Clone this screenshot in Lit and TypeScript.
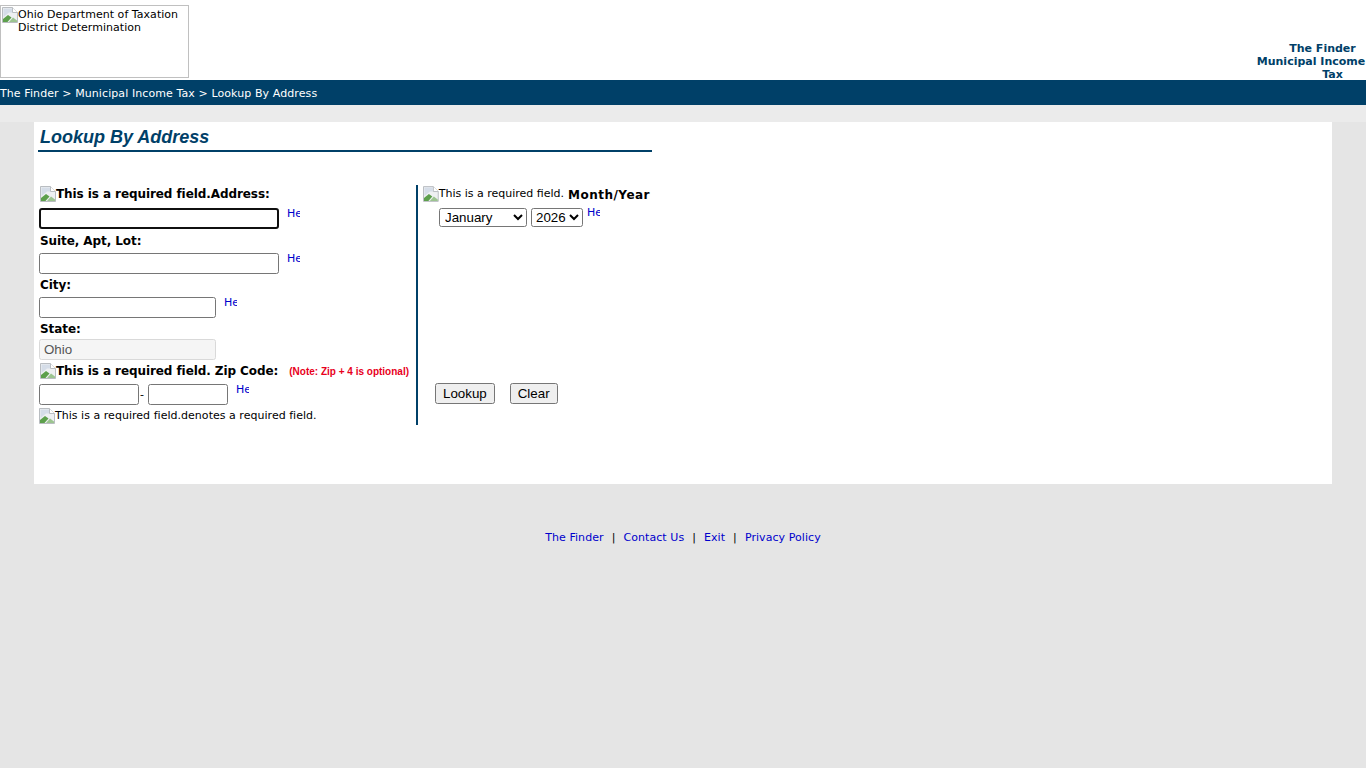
import { LitElement, html, css } from "lit";
import { customElement } from "lit/decorators.js";

const broken = html`<svg class="broken" width="16" height="16" viewBox="0 0 16 16">
  <path d="M0.5 0.5H10.5L15.5 5.5V15.5H0.5Z" fill="#eef0f2" stroke="#b9bdc1"/>
  <path d="M10.5 0.5V5.5H15.5" fill="#fff" stroke="#b9bdc1"/>
  <path d="M1.5 1.5H10V5.5H7L1.5 10Z" fill="#d5dde8"/>
  <path d="M1 15V12L6 8L9.5 10.5L5.5 15Z" fill="#5da04c"/>
  <path d="M7 15L11 10.5L15 13.5V15Z" fill="#9cc490"/>
</svg>`;

@customElement("app-root")
export class AppRoot extends LitElement {
  static styles = css`
    :host { display: block; min-height: 768px; background: #e5e5e5; font-family: "DejaVu Sans", Verdana, sans-serif; font-size: 11px; color: #000; }
    a { color: #0000cc; text-decoration: none; }
    .header { background: #fff; height: 80px; display: flex; justify-content: space-between; }
    .logo { box-sizing: border-box; width: 189px; height: 73px; margin-top: 5px; border: 1px solid #c0c0c0; display: flex; align-items: flex-start; line-height: 13px; padding: 1px 0 0 1px; }
    .logo .broken { flex: none; }
    .logo span { margin-top: 1px; font-size: 11px; letter-spacing: 0.04px; }
    .app { width: 110px; margin-top: 42px; text-align: center; font-weight: 700; font-size: 11px; line-height: 13px; color: #004068; white-space: nowrap; }
    .app .a { display: block; padding-left: 23px; }
    .app .b { display: block; }
    .app .c { display: block; padding-left: 43px; }
    .crumb { box-sizing: border-box; height: 25px; background: #004068; color: #fff; line-height: 25px; padding-top: 1px; font-size: 11px; letter-spacing: 0.09px; }
    .strip { height: 17px; background: #ebebeb; }
    .card { background: #fff; margin: 0 34px; height: 362px; box-sizing: border-box; padding-top: 4px; }
    h1 { margin: 0 0 0 4px; width: 614px; box-sizing: border-box; height: 26px; padding-left: 2px; border-bottom: 2px solid #004068; font: italic 700 18px/22px "Liberation Sans", Arial, sans-serif; color: #004068; }
    .form { display: flex; margin-top: 33px; height: 240px; }
    .left { width: 382px; box-sizing: border-box; padding-left: 5px; }
    .right { border-left: 2px solid #004068; flex: none; width: 234px; box-sizing: border-box; padding-left: 5px; display: flex; flex-direction: column; }
    .lab { box-sizing: border-box; font-weight: 700; font-size: 12px; line-height: 17px; padding: 2px 0 0 1px; display: flex; align-items: flex-start; white-space: nowrap; height: 22px; letter-spacing: -0.08px; }
    .lab.first { padding-top: 1px; height: 23px; }
    .lab.state { height: 20px; }
    .lab.zip { height: 23px; }
    .row { display: flex; align-items: flex-start; height: 22px; }
    .row.tall { height: 23px; }
    input { box-sizing: border-box; height: 21px; margin: 0; padding: 1px 4px; border: 1px solid #767676; border-radius: 2.5px; background: #fff; font: 13.333px "Liberation Sans", Arial, sans-serif; outline: none; }
    input.focus { border: 2px solid #101010; border-radius: 3px; }
    input[disabled] { background: #f5f5f5; border-color: #d9d9d9; color: #555; }
    .w240 { width: 240px; }
    .w177 { width: 177px; }
    .w100 { width: 100px; }
    .w80 { width: 80px; }
    .he { width: 13px; overflow: hidden; white-space: nowrap; display: block; font-size: 11px; line-height: 13px; }
    .ml8 { margin-left: 8px; margin-top: -1px; }
    .note { color: #e8001c; font: 700 10px/13px "Liberation Sans", Arial, sans-serif; margin-left: 11px; margin-top: 2px; letter-spacing: 0; }
    .dash { line-height: 21px; font-size: 11px; width: 9px; padding-left: 1px; box-sizing: border-box; text-align: left; }
    .req { display: flex; align-items: flex-start; line-height: 13px; font-size: 11px; white-space: nowrap; letter-spacing: 0.03px; padding-top: 1px; }
    .reqtext { margin-top: 1px; }
    .my { display: flex; align-items: flex-start; height: 23px; white-space: nowrap; font-size: 11px; line-height: 17px; padding-top: 1px; box-sizing: border-box; }
    .my span { margin-top: -1px; }
    .my b { font-size: 12px; margin-left: 4px; letter-spacing: 0.04em; margin-top: 1px; }
    .sel { display: flex; align-items: flex-start; padding-left: 16px; gap: 4px; height: 21px; }
    select { box-sizing: border-box; height: 19px; font: 13.333px "Liberation Sans", Arial, sans-serif; margin: 0; padding: 0; border: 1px solid #767676; border-radius: 2.5px; background: #fff; }
    .mo { width: 88px; padding-left: 1px; }
    .yr { width: 52px; }
    .sel .he { margin-top: -2px; }
    .btns { margin-top: 154px; padding-left: 12px; display: flex; gap: 15px; }
    button { box-sizing: border-box; height: 21px; padding: 0 7px; font: 13.333px "Liberation Sans", Arial, sans-serif; background: #efefef; border: 1px solid #767676; border-radius: 2.5px; color: #000; }
    .foot { display: flex; justify-content: center; margin-top: 47px; font-size: 11px; line-height: 13px; gap: 8px; letter-spacing: 0.07px; }
  `;

  render() {
    return html`
      <div class="header">
        <div class="logo">${broken}<span>Ohio Department of Taxation<br />District Determination</span></div>
        <div class="app"><span class="a">The Finder</span><span class="b">Municipal Income</span><span class="c">Tax</span></div>
      </div>
      <div class="crumb">The Finder &gt; Municipal Income Tax &gt; Lookup By Address</div>
      <div class="strip"></div>
      <div class="card">
        <h1>Lookup By Address</h1>
        <div class="form">
          <div class="left">
            <div class="lab first">${broken}This is a required field.Address:</div>
            <div class="row tall"><input class="w240 focus" /><a class="he ml8" href="#">Help</a></div>
            <div class="lab">Suite, Apt, Lot:</div>
            <div class="row"><input class="w240" /><a class="he ml8" href="#">Help</a></div>
            <div class="lab">City:</div>
            <div class="row"><input class="w177" /><a class="he ml8" href="#">Help</a></div>
            <div class="lab state">State:</div>
            <div class="row"><input class="w177" disabled value="Ohio" /></div>
            <div class="lab zip">${broken}This is a required field. Zip Code:<span class="note">(Note: Zip + 4 is optional)</span></div>
            <div class="row tall"><input class="w100" /><span class="dash">-</span><input class="w80" /><a class="he ml8" href="#">Help</a></div>
            <div class="req">${broken}<span class="reqtext">This is a required field.denotes a required field.</span></div>
          </div>
          <div class="right">
            <div class="my">${broken}<span>This is a required field.</span><b>Month/Year</b></div>
            <div class="sel">
              <select class="mo"><option>January</option></select>
              <select class="yr"><option>2026</option></select>
              <a class="he" href="#">Help</a>
            </div>
            <div class="btns"><button>Lookup</button><button>Clear</button></div>
          </div>
        </div>
      </div>
      <div class="foot">
        <a href="#">The Finder</a><span>|</span><a href="#">Contact Us</a><span>|</span><a href="#">Exit</a><span>|</span><a href="#">Privacy Policy</a>
      </div>
    `;
  }
}
